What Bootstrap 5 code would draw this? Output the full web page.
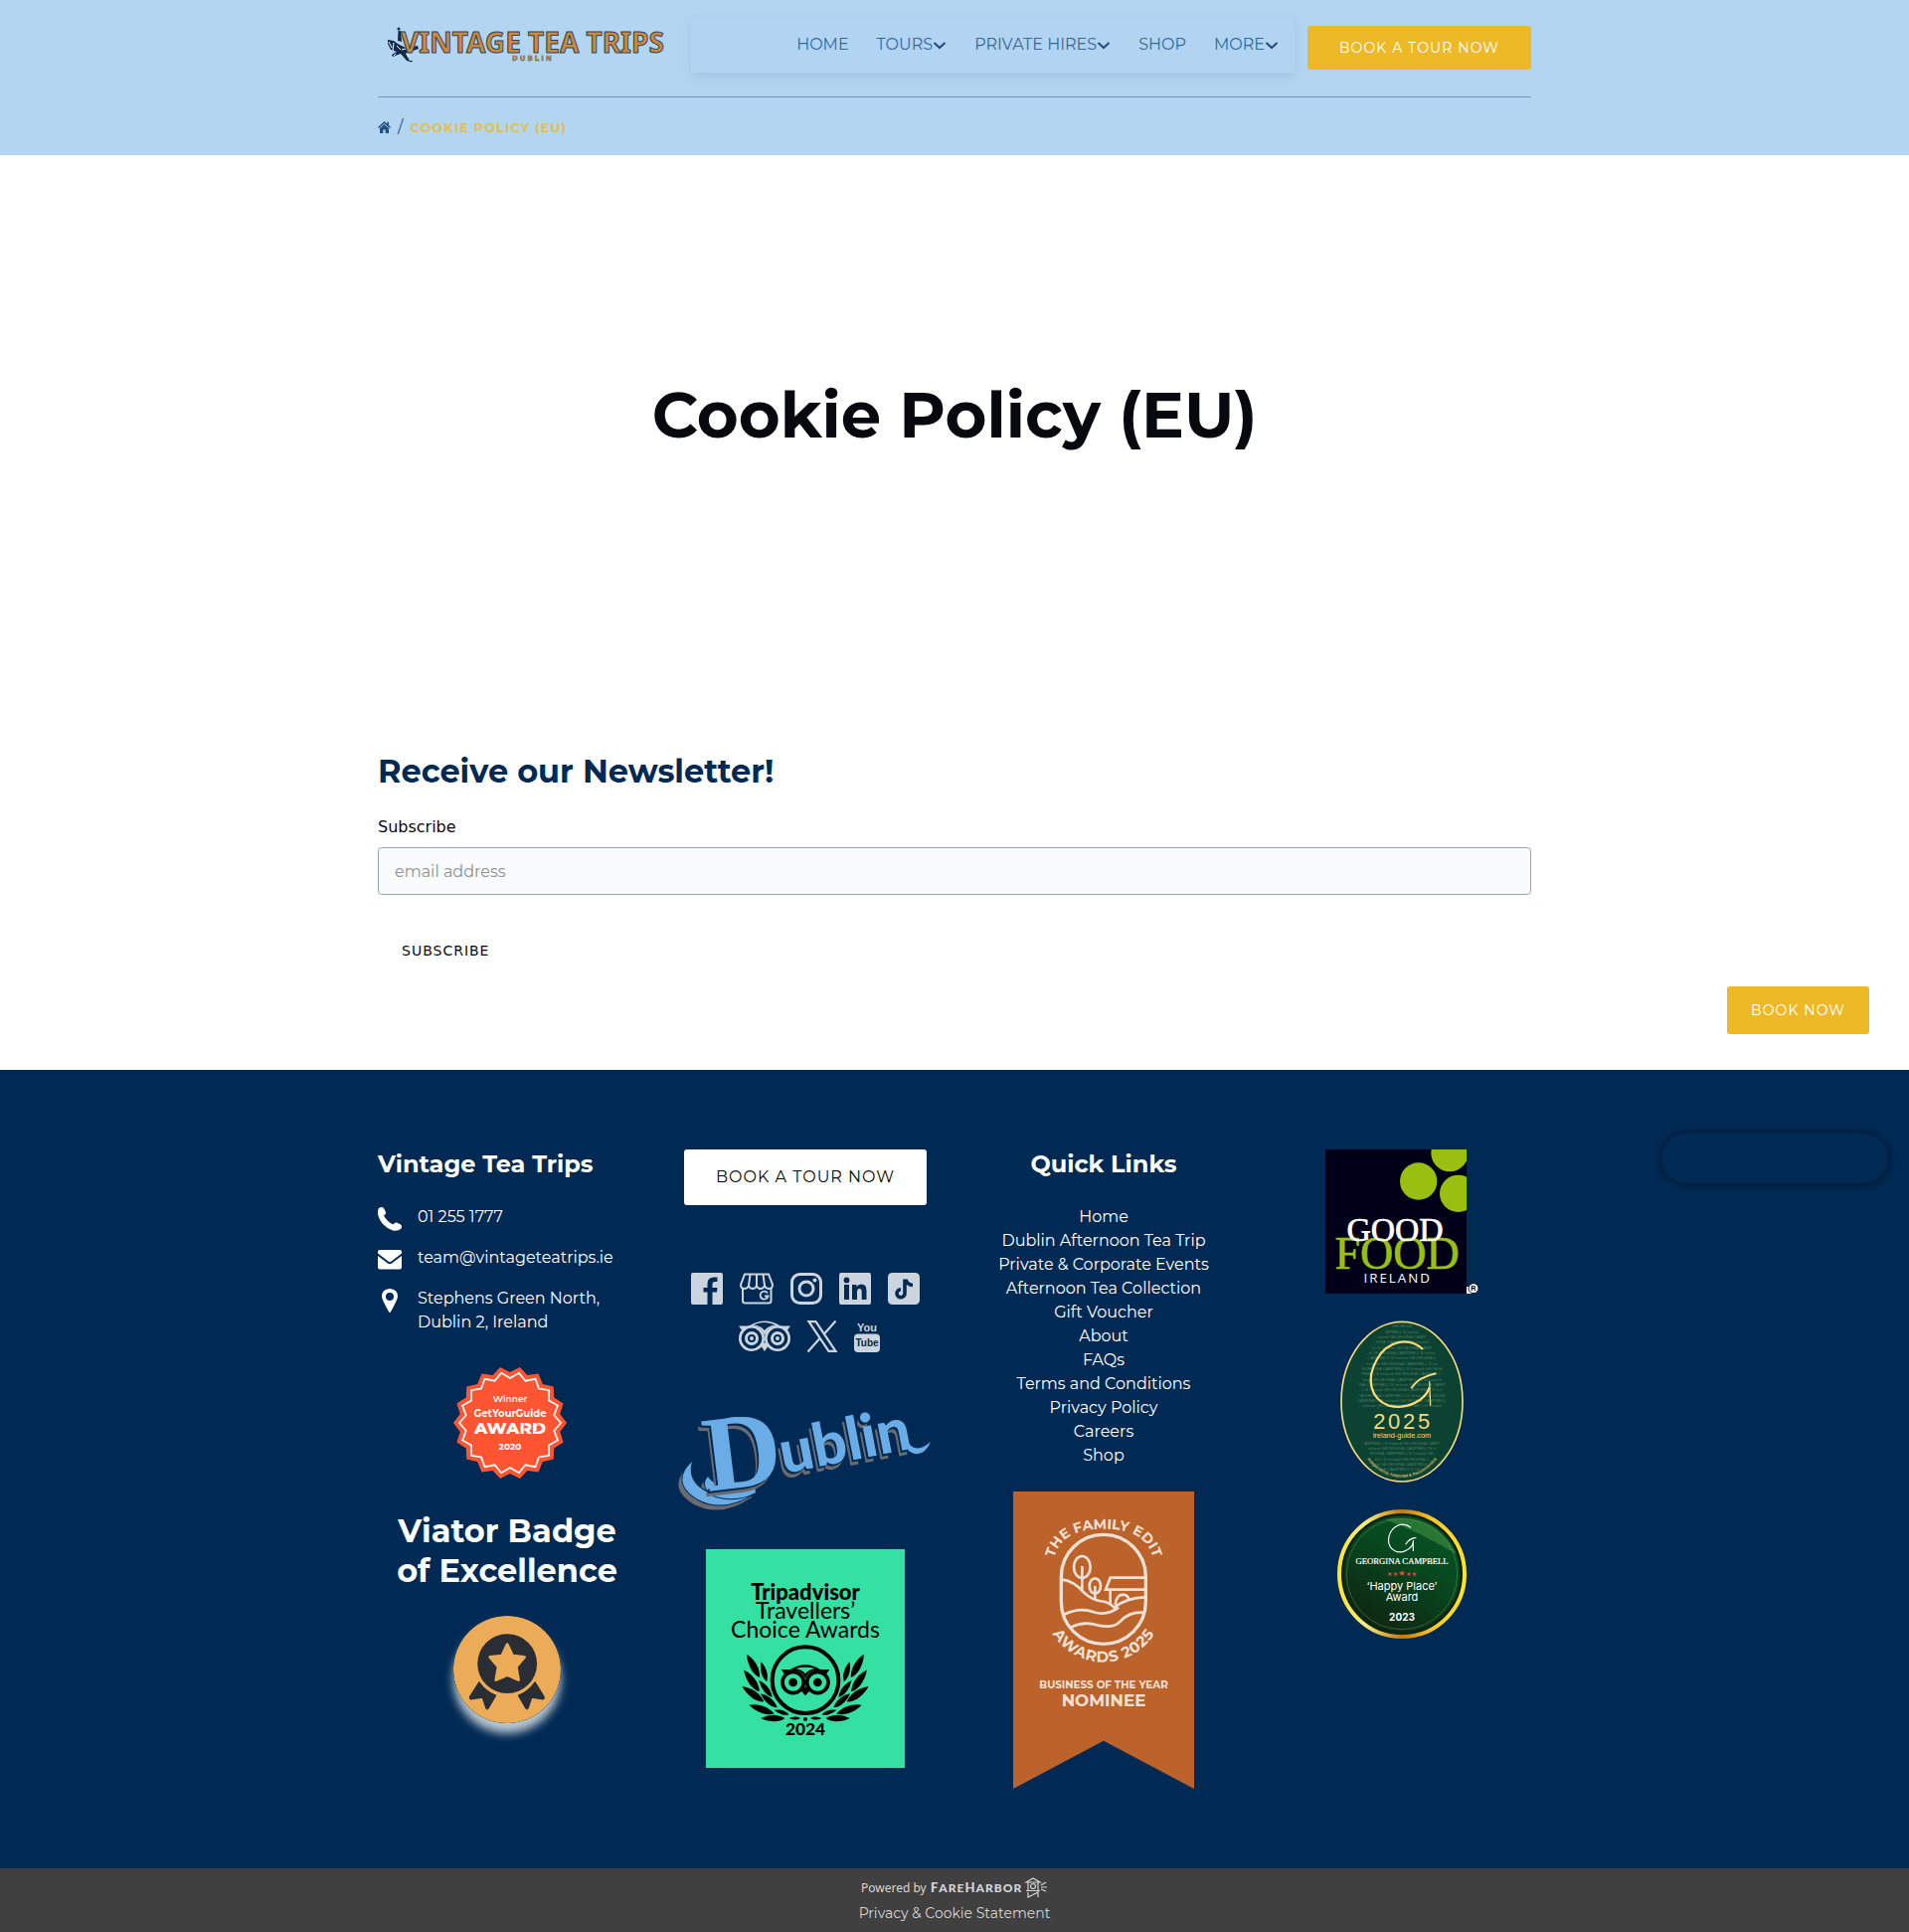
<!DOCTYPE html>
<html lang="en">
<head>
<meta charset="utf-8">
<meta name="viewport" content="width=device-width, initial-scale=1">
<title>Cookie Policy (EU) - Vintage Tea Trips</title>
<link href="https://cdn.jsdelivr.net/npm/bootstrap@5.3.0/dist/css/bootstrap.min.css" rel="stylesheet">
<style>
:root{--navy:#002a54;--gold:#edb927;--sky:#b2d6f1}
body{font-family:Montserrat,Inter,"Liberation Sans",sans-serif;font-size:16px;line-height:24px;color:#08090f}
a{text-decoration:none}
svg{display:block;flex-shrink:0}
.site-wrap{max-width:1184px}
.site-head{background:var(--sky)}
.head-row{padding:17px 0 24px;border-bottom:1px solid #7097ba}
.menu-box{background:#b0d4f2;height:56px;gap:28px;padding:0 16px;box-shadow:0 4px 10px rgba(0,42,84,.09)}
.menu-box a{color:#3c6693;font-size:16px}
.btn-gold{background:var(--gold);color:#fff;border-radius:3px;font-size:14px;letter-spacing:.08em;border:0}
.btn-gold:hover{background:#d9a71c;color:#fff}
.btn-tour{height:44px;padding:0 32px;line-height:44px;margin:9px 0 0 13px}
.crumbs{height:58px;gap:7px;padding-top:2px;color:#24507f}
.crumbs b{font-size:13px;letter-spacing:1px;font-weight:700;color:#e2bf52}
.page-title{font-size:64px;line-height:80px;font-weight:700;padding-top:221px;margin-bottom:299px}
.news-title{font-size:32px;line-height:40px;font-weight:700;color:var(--navy);margin-bottom:24px}
.news-form{font-family:"DejaVu Sans",sans-serif}
.mail-box{font-family:Montserrat,Inter,sans-serif;height:48px;background:#fafbfd;border:1px solid #93a6b8;border-radius:4px;padding:0 16px}
.mail-box::placeholder{color:#8a9299}
.btn-sub{height:48px;padding:0 24px;margin-top:32px;font-size:14px;letter-spacing:1px;border:0;background:none;color:#08090f}
.main-area{padding-bottom:96px}
.float-book{right:40px;bottom:36px;height:48px;line-height:48px;padding:0 24px}
.site-foot{background:var(--navy);color:#fff;padding:80px 0}
.site-foot a{color:#fff}
.foot-cols{--bs-gutter-x:40px}
.foot-title{font-size:24px;line-height:30px;font-weight:700;margin-bottom:26px}
.contact-list{gap:17px;margin-bottom:32px}
.contact-list li{gap:16px}
.contact-list svg{margin:2px 0 -2px}
.viator-title{font-size:32px;line-height:40px;font-weight:700;margin:32px 0 25px}
.btn-white{background:#fff;color:#08090f!important;height:56px;line-height:56px;padding:0 32px;border-radius:3px;letter-spacing:1px;font-size:16px;border:0}
.social-rows{margin:68px 0 52px;gap:16px;color:#ccd4dd}
.social-rows a{color:inherit}
.gap-soc{gap:17px}
.soc-second{padding-left:8px}
.mt-33{margin-top:33px}
.mt-27{margin-top:27px}
.medal{width:108px;height:108px;border-radius:50%;box-shadow:0 10px 10px rgba(235,240,240,.8)}
.chat-pill{right:21px;top:64px;width:228px;height:50px;border-radius:25px;background:var(--navy);box-shadow:0 1px 12px rgba(0,0,0,.5)}
.bottom-bar{background:#404040;height:64px;padding-top:9px;gap:2px}
.bottom-bar a{color:#d6d6d6;font-size:14px;line-height:24px}
</style>
<script src="https://cdn.jsdelivr.net/npm/bootstrap@5.3.0/dist/js/bootstrap.bundle.min.js"></script>
</head>
<body>
<header class="site-head">
 <div class="container site-wrap">
  <div class="head-row d-flex align-items-start">
   <a href="#" class="me-4" aria-label="Vintage Tea Trips Dublin">
    <svg width="291" height="56" viewBox="380 17 291 56">
     <g fill="#13294f"><circle cx="401" cy="29" r="1.5"/><path d="M400.500 31L400 41L404 42L403 31Z"/><path d="M390 40L396 41L400 44L408 48L420 46L421 49L413 52L408 54L412 61L415 61L414 62.500L409 61L403 54L395 57L394 55L399 52L393 50L390 44Z"/></g>
     <g stroke="#fff" stroke-width="1" fill="none"><path d="M391 42l3 6M396 43l-1 8M399 46l4 4M404 50l4-1M398 54l-2 2M409 53l2 4"/></g>
     <text x="403" y="53" font-family="'Noto Sans','Open Sans',sans-serif" font-weight="700" font-size="28" fill="#cd8b39" stroke="#33435f" stroke-width="1">VINTAGE TEA TRIPS</text>
     <text x="515" y="61" font-family="'DejaVu Sans',sans-serif" font-weight="700" font-size="7" letter-spacing="2" fill="#cd8b39" stroke="#33435f" stroke-width=".3">DUBLIN</text>
    </svg>
   </a>
   <nav class="menu-box d-flex flex-grow-1 justify-content-end align-items-center">
    <a href="#">HOME</a>
    <a href="#" class="d-flex align-items-center">TOURS<svg width="14" height="14" viewBox="0 0 14 14" fill="none" stroke="#24507f" stroke-width="2.200"><path d="M1.500 5L7 10L12.500 5"/></svg></a>
    <a href="#" class="d-flex align-items-center">PRIVATE HIRES<svg width="14" height="14" viewBox="0 0 14 14" fill="none" stroke="#24507f" stroke-width="2.200"><path d="M1.500 5L7 10L12.500 5"/></svg></a>
    <a href="#">SHOP</a>
    <a href="#" class="d-flex align-items-center">MORE<svg width="14" height="14" viewBox="0 0 14 14" fill="none" stroke="#24507f" stroke-width="2.200"><path d="M1.500 5L7 10L12.500 5"/></svg></a>
   </nav>
   <a href="#" class="btn btn-gold btn-tour">BOOK A TOUR NOW</a>
  </div>
  <div class="crumbs d-flex align-items-center">
   <a href="#" aria-label="Home"><svg width="13" height="12" viewBox="0 0 13 12" fill="#24507f"><path d="M6.500 0L0 6L1 7L6.500 2L12 7L13 6L11 4V.8H9.300V2.600Z"/><path d="M6.500 3L2 7V12H5.300V8.500H7.700V12H11V7Z"/></svg></a>
   <span>/</span><b>COOKIE POLICY (EU)</b>
  </div>
 </div>
</header>

<main class="main-area position-relative">
 <div class="container site-wrap">
  <h1 class="page-title text-center">Cookie Policy (EU)</h1>
  <h2 class="news-title">Receive our Newsletter!</h2>
  <form class="news-form">
   <label for="mail" class="d-block mb-2">Subscribe</label>
   <input id="mail" type="email" class="mail-box d-block w-100" placeholder="email address">
   <button type="button" class="btn-sub">SUBSCRIBE</button>
  </form>
 </div>
 <a href="#" class="btn btn-gold float-book position-absolute">BOOK NOW</a>
</main>

<footer class="site-foot position-relative">
 <div class="container site-wrap">
  <div class="row foot-cols">
   <div class="col-3">
    <h4 class="foot-title">Vintage Tea Trips</h4>
    <ul class="contact-list list-unstyled d-flex flex-column">
     <li class="d-flex"><svg width="24" height="24" viewBox="0 0 24 24" fill="#fff"><path d="M1 1Q4-1 6 1L8 5Q8.500 7 6 8.500Q9 14.500 15.500 17.500Q17 15 19 15.500L23 17.500Q25 19.500 23 22Q20 24.500 15 23.500Q3 19 .2 8Q-.5 3 1 1Z"/></svg><a href="#">01 255 1777</a></li>
     <li class="d-flex"><svg width="24" height="24" viewBox="0 0 24 24" fill="#fff"><path d="M2 2H22Q24 2 24 4V5.500L13.500 13.500Q12 14.500 10.500 13.500L0 5.500V4Q0 2 2 2Z"/><path d="M0 8L10 15.500Q12 17 14 15.500L24 8V19.500Q24 21.500 22 21.500H2Q0 21.500 0 19.500Z"/></svg><a href="#">team@vintageteatrips.ie</a></li>
     <li class="d-flex"><svg width="24" height="24" viewBox="0 0 24 24" fill="#fff" fill-rule="evenodd"><path d="M12 0Q20 .5 20 8Q20 10.500 13 23.300Q12 24.500 11 23.300Q4 10.500 4 8Q4 .5 12 0ZM12 4A4 4 0 1 0 12 12A4 4 0 1 0 12 4Z"/></svg><span>Stephens Green North,<br>Dublin 2, Ireland</span></li>
    </ul>
    <svg class="mx-auto" width="120" height="114" viewBox="-63 -57 120 114" id="gyg">
     <polygon data-outer="57" data-inner="51" fill="#ff5533"/>
     <polygon data-outer="51" data-inner="45" fill="none" stroke="#fff" stroke-width="1.700"/>
     <g fill="#fff" text-anchor="middle" font-family="Montserrat,Inter,sans-serif" font-weight="600">
      <text y="-21" font-size="9">Winner</text><text y="-6" font-size="10" font-weight="700">GetYourGuide</text>
      <text y="11" font-size="17" font-weight="800">AWARD</text><text y="27" font-size="9" font-weight="700">2020</text></g>
     <g stroke="#ff5533" stroke-width=".8"><path d="M-21-2L-16 4M14 0V12M24-1L31 3M25 9L32 6"/></g>
    </svg>
    <h3 class="viator-title text-center">Viator Badge<br>of Excellence</h3>
    <svg class="mx-auto medal" viewBox="258 375 325 325">
     <circle cx="420.500" cy="537.500" r="162.500" fill="#ecac57"/><circle cx="421" cy="520" r="90" fill="#2a2d33"/>
     <path d="M421 462L437 496L473 500L448 529L455 569L421 554L387 569L394 529L369 500L405 496Z" fill="#ecac57" stroke="#ecac57" stroke-width="9" stroke-linejoin="round"/>
     <g fill="#2a2d33" stroke="#2a2d33" stroke-width="4" stroke-linejoin="round"><path d="M336 576Q356 605 386 616L364 654Q360 660 357 654L346 622L312 627Q306 627 308 620Z"/><path d="M505 576Q485 605 455 616L477 654Q481 660 484 654L495 622L528 627Q534 627 532 620Z"/></g>
    </svg>
   </div>

   <div class="col-3 d-flex flex-column align-items-center">
    <a href="#" class="btn btn-white">BOOK A TOUR NOW</a>
    <div class="social-rows d-flex flex-column">
     <div class="d-flex gap-soc justify-content-center">
      <a href="#" aria-label="Facebook"><svg width="32" height="32" viewBox="0 0 32 32"><rect width="32" height="32" rx="2" fill="currentColor"/><path d="M16.500 32V19.500H12.500V15H16.500V11Q16.500 4.500 23 4.500H26.500V9H24Q21.500 9 21.500 11.500V15H26.500L26 19.500H21.500V32Z" fill="#002a54"/></svg></a>
      <a href="#" aria-label="Google Business"><svg width="34" height="32" viewBox="0 0 34 32" fill="none" stroke="currentColor" stroke-width="2"><path d="M5 1.500H29L33 12Q33 16 29.500 16Q26 16 25 13Q24 16 21 16Q18 16 17 13Q16 16 13 16Q10 16 9 13Q8 16 4.500 16Q1 16 1 12Z"/><path d="M10.500 2L9 13M17 2V13M23.500 2L25 13M3 16V28Q3 30.500 5.500 30.500H29Q31.500 30.500 31.500 28V16"/><path d="M28 20.500A4 4 0 1 0 28.500 23.500H25" stroke-width="1.800"/></svg></a>
      <a href="#" aria-label="Instagram"><svg width="32" height="32" viewBox="0 0 32 32" fill="none" stroke="currentColor" stroke-width="3"><rect x="1.500" y="1.500" width="29" height="29" rx="8"/><circle cx="16" cy="16" r="7"/><circle cx="24.500" cy="7.500" r="2" fill="currentColor" stroke="none"/></svg></a>
      <a href="#" aria-label="LinkedIn"><svg width="32" height="32" viewBox="0 0 32 32"><rect width="32" height="32" rx="2" fill="currentColor"/><g fill="#002a54"><circle cx="7.500" cy="7.500" r="2.900"/><path d="M5 12H10V27H5Z"/><path d="M13 12H17.500V14.200Q19 11.600 22.300 11.600Q27.500 11.600 27.500 18V27H22.700V19Q22.700 16 20.500 16Q18 16 18 19V27H13Z"/></g></svg></a>
      <a href="#" aria-label="TikTok"><svg width="32" height="32" viewBox="0 0 32 32"><rect width="32" height="32" rx="4.500" fill="currentColor"/><path d="M17 6.500V20.500A4 4 0 1 1 13 16.700M18 7Q19.500 12.200 25 12.500" fill="none" stroke="#002a54" stroke-width="3.600"/></svg></a>
     </div>
     <div class="d-flex gap-3 justify-content-center soc-second">
      <a href="#" aria-label="Tripadvisor"><svg width="52" height="32" viewBox="0 0 52 32" fill="none" stroke="currentColor"><g stroke-width="2.600"><circle cx="13" cy="18" r="11.700"/><circle cx="39" cy="18" r="11.700"/></g><g stroke-width="3"><circle cx="13" cy="18" r="5.500"/><circle cx="39" cy="18" r="5.500"/></g><g fill="currentColor" stroke="none"><circle cx="13" cy="18" r="2"/><circle cx="39" cy="18" r="2"/><path d="M0 5.500H10Q26-4.500 42 5.500H52L48 11Q43 5 36 5.500Q29 7 26 15Q23 7 16 5.500Q9 5 4 11Z"/><path d="M22 25L26 31L30 25L26 22Z"/></g><path d="M15 4.500Q26-.5 37 4.500Q30 5 26 10Q22 5 15 4.500Z" fill="#002a54" stroke="none"/></svg></a>
      <a href="#" aria-label="X"><svg width="32" height="32" viewBox="0 0 32 32" fill="none" stroke="currentColor" stroke-width="2.200"><path d="M2.500 1.200H9.500L29.500 30.800H22.500Z"/><path d="M29.500.5L18 13.500M13.500 18L1.500 31.500"/></svg></a>
      <a href="#" aria-label="YouTube"><svg width="26" height="32" viewBox="0 0 26 32"><rect y="13.500" width="26" height="18.500" rx="4" fill="currentColor"/><g text-anchor="middle" font-family="'Liberation Sans',sans-serif" font-weight="700"><text x="13" y="11" font-size="11" fill="currentColor">You</text><text x="13" y="26" font-size="10" fill="#002a54">Tube</text></g></svg></a>
     </div>
    </div>
    <svg width="260" height="113" viewBox="0 0 260 113" role="img" aria-label="Dublin">
     <defs><g id="swash"><path d="M16 58Q-6 79 22 96Q49 110 80 89Q52 99 32 89Q10 78 16 58Z"/><path d="M32 73Q23 84 40 93Q62 99 80 89L79 82Q58 87 45 82Q34 78 32 73Z"/><path d="M37 22Q53 8 78 16L79 24Q60 11 37 22Z"/></g></defs>
     <g fill="#6b6a70" transform="translate(-4 5)"><use href="#swash"/></g>
     <g fill="#6aace6" stroke="#002a54" stroke-width="2" paint-order="stroke"><use href="#swash"/></g>
     <g fill="#6aace6" style="text-shadow:-1px 1px 0 #002a54,-2px 2px 0 #002a54,-4px 5px 0 #6b6a70"><text transform="translate(32 88) rotate(-7)" font-family="'Liberation Serif',serif" font-weight="700" font-size="108">D</text><text transform="translate(108 70) rotate(-11)" font-family="Lato,sans-serif" font-weight="900" font-size="60">ublin</text></g>
     <path d="M233 38Q241 51 256 38Q250 52 240 50Q232 48 231 41Z" fill="#6aace6"/>
    </svg>
    <svg class="mt-33" width="200" height="220" viewBox="120 504 600 660" role="img" aria-label="Tripadvisor Travellers' Choice Awards 2024">
     <rect x="120" y="504" width="600" height="660" fill="#34e1a2"/>
     <g text-anchor="middle" font-family="Lato,sans-serif" fill="#000"><text x="420" y="657" font-size="66" font-weight="900">Tripadvisor</text><text x="420" y="714" font-size="69">Travellers’</text><text x="420" y="771" font-size="69">Choice Awards</text><text x="420" y="1066" font-size="52" font-weight="900">2024</text></g>
     <circle cx="420" cy="899" r="100" fill="none" stroke="#000" stroke-width="12"/>
     <g fill="none" stroke="#000" stroke-width="11"><circle cx="383" cy="906" r="32"/><circle cx="457" cy="906" r="32"/></g>
     <circle cx="383" cy="906" r="13"/><circle cx="457" cy="906" r="13"/><circle cx="420" cy="1017" r="6"/>
     <path d="M347 867H374Q420 838 466 867H493L480 885Q464 864 438 873Q424 880 420 898Q416 880 402 873Q376 864 360 885ZM408 932L420 946L432 932L420 918Z"/>
     <path d="M390 864Q420 856 450 864Q428 868 420 880Q412 868 390 864Z" fill="#34e1a2"/>
     <defs><path id="lf" d="M-40 0Q-15-13 12-10Q32-6 40 0Q30 9 8 11Q-20 11-40 0Z"/>
     <g id="laurel"><use href="#lf" transform="translate(263 856) rotate(61)"/><use href="#lf" transform="translate(258 901) rotate(54)"/><use href="#lf" transform="translate(262 941) rotate(35)"/><use href="#lf" transform="translate(288 987) rotate(19)"/><use href="#lf" transform="translate(322 1014) scale(.9)"/><use href="#lf" transform="translate(295 874) rotate(74) scale(.78)"/><use href="#lf" transform="translate(300 925) rotate(52) scale(.8)"/><use href="#lf" transform="translate(310 961) rotate(40) scale(.82)"/><use href="#lf" transform="translate(348 996) rotate(16) scale(.58)"/><use href="#lf" transform="translate(388 1014) scale(.43)"/></g></defs>
     <use href="#laurel"/><use href="#laurel" transform="translate(840 0) scale(-1 1)"/>
    </svg>
   </div>

   <div class="col-3 text-center">
    <h4 class="foot-title">Quick Links</h4>
    <ul class="list-unstyled mb-4">
     <li><a href="#">Home</a></li><li><a href="#">Dublin Afternoon Tea Trip</a></li><li><a href="#">Private &amp; Corporate Events</a></li><li><a href="#">Afternoon Tea Collection</a></li><li><a href="#">Gift Voucher</a></li><li><a href="#">About</a></li><li><a href="#">FAQs</a></li><li><a href="#">Terms and Conditions</a></li><li><a href="#">Privacy Policy</a></li><li><a href="#">Careers</a></li><li><a href="#">Shop</a></li>
    </ul>
    <svg class="mx-auto" width="182" height="299" viewBox="87 60 546 897" role="img" aria-label="The Family Edit Awards 2025">
     <path d="M87 60H633V957L360 812L87 957Z" fill="#bb632a"/>
     <defs><path id="arcTop" d="M206 310C203 200 275 173 360 173C445 173 517 200 514 310"/><path id="arcBot" d="M188 452C210 520 280 575 360 575C440 575 510 520 532 452"/></defs>
     <g font-family="Montserrat,Lato,sans-serif" font-weight="700" fill="#f1e0d5" text-anchor="middle"><text font-size="42"><textPath href="#arcTop" startOffset="50%">THE FAMILY EDIT</textPath></text><text font-size="46" letter-spacing="2"><textPath href="#arcBot" startOffset="50%">AWARDS 2025</textPath></text>
     <text x="360" y="655" font-size="31">BUSINESS OF THE YEAR</text><text x="360" y="708" font-size="50">NOMINEE</text></g>
     <g fill="none" stroke="#f1e0d5" stroke-width="8"><rect x="232" y="190" width="255" height="330" rx="127" stroke-width="10"/><ellipse cx="295" cy="288" rx="25" ry="33"/><path d="M295 285V358M334 345V388"/><ellipse cx="334" cy="345" rx="17" ry="23"/><path d="M235 326Q270 330 300 364Q325 390 365 393Q380 397 392 410Q430 380 485 379M485 320H380L366 356H485M380 356V398M395 402Q398 372 418 371Q432 372 436 384"/><path d="M240 431Q290 408 330 424Q370 436 405 410M262 469Q300 450 340 463Q390 475 410 452Q440 420 485 426"/></g>
    </svg>
   </div>

   <div class="col-3 d-flex flex-column align-items-center">
    <svg width="157" height="145" viewBox="66 48 471 435" role="img" aria-label="Good Food Ireland">
     <defs><clipPath id="gfi"><rect x="69" y="48" width="426" height="435"/></clipPath></defs>
     <rect x="69" y="48" width="426" height="435" fill="#000019"/><g fill="#99c011" clip-path="url(#gfi)"><circle cx="350" cy="144" r="56"/><circle cx="444" cy="59" r="56"/><circle cx="470" cy="181" r="56"/></g>
     <g text-anchor="middle" font-family="'Liberation Serif',serif"><text x="285" y="408" font-size="138" fill="#99c011" stroke="#99c011" stroke-width="2">FOOD</text><text x="279" y="323" font-size="101" fill="#fff" stroke="#fff" stroke-width="2">GOOD</text><text x="287" y="449" font-family="'Open Sans',sans-serif" font-size="40" letter-spacing="6" fill="#fff">IRELAND</text></g>
     <path d="M495 462H512V483H495Z" fill="#fff"/><circle cx="516" cy="467" r="15" fill="#fff" stroke="#111" stroke-width="3"/><text x="516" y="475" font-family="'Liberation Sans',sans-serif" font-weight="700" font-size="22" text-anchor="middle">R</text>
    </svg>
    <svg class="mt-27" width="124" height="163" viewBox="114 563 372 489" role="img" aria-label="Georgina Campbell ireland-guide.com 2025">
     <defs><path id="ovb" d="M184 966Q230 1036 300 1036Q370 1036 416 966"/></defs>
     <ellipse cx="300" cy="808" rx="183" ry="241" fill="#0b4232"/>
     <g id="micro" font-family="'Liberation Sans',sans-serif" font-size="13" fill="#4d7b60" text-anchor="middle"></g>
     <ellipse cx="300" cy="808" rx="183" ry="241" fill="none" stroke="#f7d978" stroke-width="5"/>
     <g fill="none" stroke="#f7d978"><path d="M363 650C320 610 255 625 225 680C190 740 205 800 260 820C315 833 370 805 383 765" stroke-width="7"/><path d="M328 768Q350 733 403 723" stroke-width="6"/><path d="M383 747L386 820" stroke-width="4"/></g>
     <g text-anchor="middle" fill="#f7d978" font-family="'Liberation Sans',sans-serif"><text x="303" y="891" font-size="66" letter-spacing="8">2025</text><text x="300" y="918" font-size="22">ireland-guide.com</text><text font-size="13"><textPath href="#ovb" startOffset="50%">Independently Assessed &amp; Recommended</textPath></text></g>
    </svg>
    <svg class="mt-27" width="130" height="130" viewBox="105 54 390 390" role="img" aria-label="Georgina Campbell Happy Place Award 2023">
     <defs><linearGradient id="ring2" x1="0" x2="1"><stop offset="0" stop-color="#ffe532"/><stop offset=".2" stop-color="#fbee7b"/><stop offset=".5" stop-color="#c07a12"/><stop offset=".75" stop-color="#fdc72f"/><stop offset="1" stop-color="#ffe22b"/></linearGradient><linearGradient id="disc" x1=".2" y1="1" x2=".8" y2="0"><stop offset="0" stop-color="#10200f"/><stop offset=".6" stop-color="#07481f"/><stop offset="1" stop-color="#0a5528"/></linearGradient></defs>
     <circle cx="300" cy="249" r="188" fill="url(#disc)" stroke="url(#ring2)" stroke-width="14"/><circle cx="300" cy="249" r="179" fill="none" stroke="#0a2412" stroke-width="8"/>
     <path d="M250 85Q400 60 465 190Q350 120 250 85Z" fill="#37873c" opacity=".7"/><circle cx="300" cy="249" r="167" fill="none" stroke="#5e8e63" stroke-width="1.500"/>
     <g fill="none" stroke="#fff" stroke-width="3.500"><path d="M327 109C300 88 270 105 261 135C253 170 280 188 305 181Q330 172 334 155"/><path d="M311 160Q320 142 343 139M334 148V180"/></g>
     <g text-anchor="middle" fill="#fff"><text x="300" y="218" font-family="'Liberation Serif',serif" font-size="26" stroke="#fff" stroke-width=".6">GEORGINA CAMPBELL</text><text x="300" y="256" fill="#de4a41" font-size="19" font-family="'DejaVu Sans',sans-serif">★★<tspan font-size="26">★</tspan>★★</text><g font-family="Inter,sans-serif"><text x="300" y="298" font-size="33">‘Happy Place’</text><text x="300" y="330" font-size="33">Award</text><text x="300" y="389" font-size="30" font-weight="700">2023</text></g></g>
    </svg>
   </div>
  </div>
 </div>
 <div class="chat-pill position-absolute"></div>
</footer>
<div class="bottom-bar d-flex flex-column align-items-center">
 <a href="#" aria-label="Powered by FareHarbor"><svg width="190" height="22" viewBox="0 0 190 22"><g fill="#d6d6d6"><text x="1" y="15" font-family="'Noto Sans',sans-serif" font-size="12">Powered by</text><text x="71" y="15" font-family="Lato,sans-serif" font-weight="900" font-size="13" letter-spacing="1">F<tspan font-size="12">ARE</tspan>H<tspan font-size="12">ARBOR</tspan></text></g><g fill="none" stroke="#d6d6d6" stroke-width="1.200"><path d="M167 5L174 1L181 5ZM169 5V13M179 5V13M167 13.500H181M169 15V20L179 15V20M182 8L187 5M182 10H188M182 12L187 14"/><circle cx="174" cy="9" r="2.500"/></g></svg></a>
 <a href="#">Privacy &amp; Cookie Statement</a>
</div>
<script>
/* Zigzag rosette: 18 tips alternating between an outer and an inner radius */
document.querySelectorAll('#gyg polygon').forEach(function (p) {
  var pts = [], i, r, a;
  for (i = 0; i < 36; i++) {
    r = i % 2 ? +p.dataset.inner : +p.dataset.outer;
    a = i * Math.PI / 18;
    pts.push((r * Math.cos(a)).toFixed(1) + ',' + (r * Math.sin(a)).toFixed(1));
  }
  p.setAttribute('points', pts.join(' '));
});
/* Microtext rows, each as long as the oval is wide at that height */
var micro = document.getElementById('micro'), phrase = "GEORGINA CAMPBELL'S Ireland  ".repeat(6);
for (var y = 585, n = 0; y < 1035; y += 16, n++) {
  if (y > 840 && y < 925) continue;
  var half = 172 * Math.sqrt(Math.max(0, 1 - Math.pow((y - 812) / 232, 2)));
  var row = document.createElementNS('http://www.w3.org/2000/svg', 'text');
  row.setAttribute('x', 300);
  row.setAttribute('y', y);
  row.textContent = phrase.substr(n * 11 % 29, Math.floor(half * 2 / 9));
  micro.appendChild(row);
}
</script>
</body>
</html>
